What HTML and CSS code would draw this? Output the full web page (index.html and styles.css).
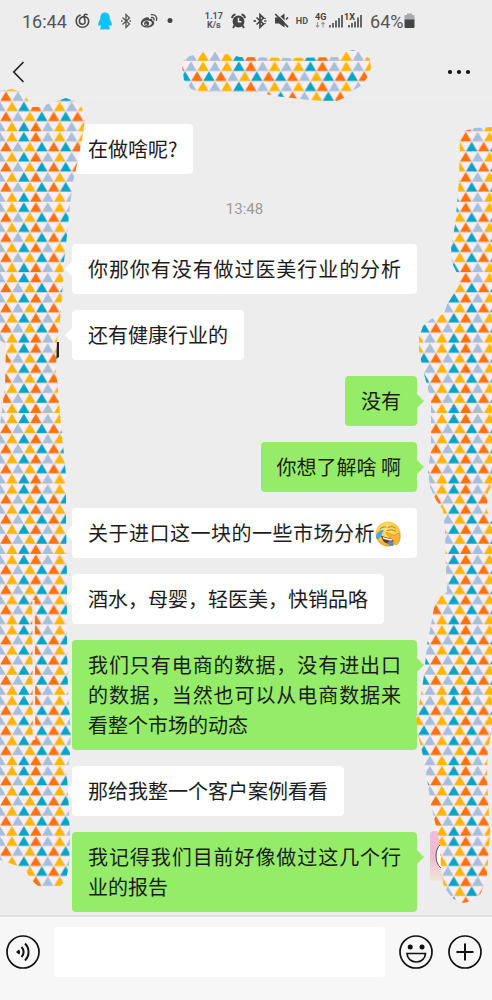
FILE: index.html
```html
<!DOCTYPE html>
<html lang="zh-CN">
  <head>
    <meta charset="UTF-8" />
    <meta name="viewport" content="width=device-width, initial-scale=1.0" />
    <title>聊天</title>
    <link rel="stylesheet" href="styles.css">
  </head>
  <body>
    <div class="page">
      <div class="status-bar">
        <div class="status-group">
          <span class="clock">16:44</span>
          <svg width="15" height="18" viewBox="0 0 15 18" fill="none" stroke="#4a4a4a" stroke-width="1.600" stroke-linecap="round">
            <path d="M5 3.200C2.600 4.200 1.200 6.300 1.200 9c0 3.700 2.800 6.300 6.300 6.300s6.200-2.700 6.200-6c0-2.800-2.200-4.700-4.700-4.700-2.600 0-4.600 2-4.600 4.500 0 1.900 1.300 3.200 3 3.200s2.800-1.200 2.700-2.700c-.1-1.200-.6-2.900-.9-4.600-.3-1.500.2-2.400 1.200-2.700.6-.2 1.100-.1 1.600.3" />
          </svg>
          <svg width="14" height="18" viewBox="0 0 14 18">
            <path fill="#0cc4fb" d="M7 .5C4 .5 2.300 2.700 2.300 5.600c0 1-.2 1.500-.6 2.300C1 9.300.2 10.700.2 12.300c0 1 .3 1.700.7 1.700.4 0 .9-.6 1.200-1.200.2.900.6 1.700 1.200 2.300-.8.300-1.200.8-1.200 1.300 0 .8 1.100 1.200 2.500 1.200 1.100 0 2-.3 2.400-.7.500.4 1.300.7 2.400.7 1.500 0 2.500-.4 2.500-1.200 0-.5-.4-1-1.200-1.300.6-.6 1-1.400 1.200-2.300.3.600.8 1.200 1.200 1.200.4 0 .7-.7.700-1.700 0-1.600-.8-3-1.500-4.400-.4-.8-.6-1.300-.6-2.300C11.700 2.700 10 .5 7 .5z" />
          </svg>
          <svg width="12" height="18" viewBox="0 0 12 18" fill="none" stroke="#555" stroke-width="1.300">
            <path d="M2.500 5.500l7 6.500L6 15.500v-13L9.500 6l-7 6.500" />
            <path d="M1 9h1.500M9.500 9H11" />
          </svg>
          <svg width="18" height="18" viewBox="0 0 18 18">
            <path fill="#4a4a4a" fill-rule="evenodd" d="M7 5.200C4 5.500.8 8.500.8 11.300c0 2.600 2.900 4.200 6.200 4.200 4 0 7.200-2.300 7.200-4.600 0-1.300-1.100-2-2-2.300.5-1.500-.6-2.300-3.200-1.300.4-1.500-.4-2.300-2-2.100zM7 8.600c2.600-.2 4.800.9 4.900 2.500.1 1.500-1.900 2.900-4.600 3.100-2.600.2-4.800-.8-4.900-2.400C2.300 10.200 4.300 8.800 7 8.600z" />
            <circle cx="6.600" cy="11.500" r="2.500" fill="#4a4a4a" />
            <circle cx="6" cy="12.200" r=".8" fill="#ededed" />
            <path d="M11.500 5.500c1.700-.3 3 .9 2.500 2.700M11.300 2.700c3.500-.7 6.200 2 5.200 5.600" fill="none" stroke="#4a4a4a" stroke-width="1.300" stroke-linecap="round" />
          </svg>
          <svg width="8" height="18" viewBox="0 0 8 18"><circle cx="4" cy="8.500" r="2.500" fill="#444" /></svg>
        </div>
        <div class="status-group status-right">
          <span class="speed">1.17<br>K/s</span>
          <svg width="15" height="18" viewBox="0 0 15 18">
            <circle cx="7.500" cy="9.500" r="5.900" fill="#444" />
            <path d="M7.500 5.800v4h3" fill="none" stroke="#ededed" stroke-width="1.500" />
            <path d="M1 6.200C1.200 4 2.500 2.700 4.500 2.400M14 6.200c-.2-2.200-1.500-3.500-3.500-3.800M3.500 13.500L2 16M11.500 13.500L13 16" fill="none" stroke="#444" stroke-width="1.900" />
          </svg>
          <svg width="14" height="18" viewBox="0 0 14 18" fill="none" stroke="#444" stroke-width="1.700">
            <path d="M3.500 5.500l7 6.500L7 15.200V2.800L10.500 6l-7 6.500" />
            <path d="M.5 9h2.300M11.200 9h2.300M12 6v1M12 11v1M2 8v2" stroke-width="1.500" />
          </svg>
          <svg width="15" height="18" viewBox="0 0 15 18">
            <path fill="#444" d="M1 5.500h4L10.500 1.500v14L5 11.500H1z" />
            <path d="M2.500 1.200L15 13.700" stroke="#ededed" stroke-width="1.200" />
            <path d="M1.200 2L14 15.200M12 7.500l2-2" stroke="#444" stroke-width="1.700" />
          </svg>
          <span class="hd">HD</span>
          <svg class="network" width="48" height="18" viewBox="0 0 48 18">
            <text x="0" y="8">4G</text>
            <path d="M2.500 10v5M.8 13.300l1.700 1.900 1.700-1.900M8 15.500v-5M6.300 12.200L8 10.300l1.700 1.900" fill="none" stroke="#999" stroke-width="1.100" />
            <path d="M15 13v2.500M18 11v4.500M21 8.500v7M24 6v9.500M27 3v12.500" stroke="#444" stroke-width="1.600" />
            <text x="29" y="8">1X</text>
            <path d="M34 13v2.500M37 11v4.500M40 9.500v6M43 5.500v10M46 3v12.500" stroke="#444" stroke-width="1.600" />
          </svg>
          <span class="battery">64%<svg width="11" height="18" viewBox="0 0 11 18">
            <path fill="#aaa" d="M3 1.500h5V3h2.500v5H.5V3H3z" />
            <path fill="#444" d="M.5 7.500h10V15a1 1 0 0 1-1 1h-8a1 1 0 0 1-1-1z" />
          </svg></span>
        </div>
      </div>

      <header class="header">
        <button class="icon-button" type="button" aria-label="返回">
          <svg width="14" height="24" viewBox="0 0 14 24" fill="none" stroke="#222" stroke-width="1.700">
            <path d="M11.500 2L1.800 12l9.700 10" />
          </svg>
        </button>
        <svg class="title-mosaic" width="194" height="60" viewBox="180 42 194 60">
          <path fill="url(#mosaic)" d="M182 66L184 60 190 56 200 53 212 51 226 54 240 57 290 58 338 57 345 52 353 50 362 53 370 59 371 68 367 78 361 86 352 91 344 98 337 101 320 101 300 99 275 96 256 92 200 92 191 89 184 80z" />
        </svg>
        <button class="icon-button" type="button" aria-label="更多">
          <svg width="24" height="24" viewBox="0 0 24 24" fill="#111">
            <circle cx="3" cy="12" r="2.100" /><circle cx="12" cy="12" r="2.100" /><circle cx="21" cy="12" r="2.100" />
          </svg>
        </button>
      </header>

      <main class="chat">
        <div class="bubble received">在做啥呢?</div>
        <time class="time">13:48</time>
        <div class="bubble received full">你那你有没有做过医美行业的分析</div>
        <div class="bubble received">还有健康行业的</div>
        <div class="bubble sent">没有</div>
        <div class="bubble sent">你想了解啥 啊</div>
        <div class="bubble received full">关于进口这一块的一些市场分析<svg class="emoji" width="26" height="26" viewBox="0 0 26 26">
          <defs>
            <radialGradient id="face" cx=".45" cy=".35" r=".65">
              <stop offset="0" stop-color="#ffe979" />
              <stop offset=".7" stop-color="#fbc63c" />
              <stop offset="1" stop-color="#e99b1c" />
            </radialGradient>
          </defs>
          <circle cx="13" cy="13" r="12.500" fill="url(#face)" />
          <path d="M5 8c2-2 4-2.500 6-2M13 6.500c3-1.500 6-1 8 1M12 9.500c3-1 6-1 8.500.5" fill="none" stroke="#b87a1c" stroke-width="1" stroke-linecap="round" />
          <path d="M6 14.500c4 2 8 3 13 3-.5 3.500-3 5-6 5s-6-3-7-8z" fill="#6f3513" />
          <path d="M7.500 15.700c3.500 1.500 7 2.200 10.500 2.200l-1 1.700c-3 0-6-.6-8.700-1.800z" fill="#fff" />
          <path d="M9 9.500C7 8 4 9.500 1.800 13c-1.500 2.500-.8 5 1.200 5 2.500 0 2.500-3.500 6-8.500z" fill="#4aa5e6" />
          <path d="M13 20.500c2-1 4-.5 5 1l.5 3c-2 1-4 .5-5-1z" fill="#4792d4" />
          <path d="M10.500 11c4 1.500 7 2.500 9.500 3.500l3-2.500c2 1 2.500 3 2 5.500-.3 2-1 5-3.500 6.300-2-.3-3-2-3-4.300-3-2-6-5-8-8.500z" fill="#fbb339" stroke="#dd8d1d" stroke-width=".7" />
        </svg></div>
        <div class="bubble received">酒水，母婴，轻医美，快销品咯</div>
        <div class="bubble sent">我们只有电商的数据，没有进出口的数据，当然也可以从电商数据来看整个市场的动态</div>
        <div class="bubble received">那给我整一个客户案例看看</div>
        <div class="bubble sent">我记得我们目前好像做过这几个行业的报告</div>
      </main>

      <form class="composer">
        <button class="icon-button" type="button" aria-label="语音">
          <svg width="36" height="36" viewBox="0 0 36 36" fill="none" stroke="#111" stroke-width="1.700">
            <circle cx="18" cy="18" r="16" />
            <path d="M11 18l3-2.600a4 4 0 0 1 0 5.200z" fill="#111" stroke="none" />
            <path d="M16.500 13a7 7 0 0 1 0 10M20 9.500a12 12 0 0 1 0 17" stroke-width="2" />
          </svg>
        </button>
        <input class="message-input" type="text" aria-label="消息" />
        <button class="icon-button" type="button" aria-label="表情">
          <svg width="36" height="36" viewBox="0 0 36 36" fill="none" stroke="#111" stroke-width="1.700">
            <circle cx="18" cy="18" r="16" />
            <circle cx="12.200" cy="13" r="2.500" fill="#111" stroke="none" />
            <circle cx="24" cy="13" r="2.500" fill="#111" stroke="none" />
            <path d="M9 19.500h18.500c-.3 5-4 8.500-9.200 8.500S9.300 24.500 9 19.500z" />
          </svg>
        </button>
        <button class="icon-button" type="button" aria-label="更多功能">
          <svg width="36" height="36" viewBox="0 0 36 36" fill="none" stroke="#111" stroke-width="1.700">
            <circle cx="18" cy="18" r="16" />
            <path d="M18 9.500v17M9.500 18h17" stroke-width="2" />
          </svg>
        </button>
      </form>

      <!-- painted over the avatars -->
      <svg class="mosaic mosaic-left" width="90" height="800" viewBox="0 88 90 800">
        <defs>
          <g id="row-a">
            <path fill="#fd720c" d="M.2 10L6 .4 11.800 10zM48.200 10L54 .4 59.800 10z" />
            <path fill="#a5c0da" d="M12.200 10L18 .4 23.800 10z" />
            <path fill="#ffb508" d="M24.200 10L30 .4 35.800 10z" />
            <path fill="#08a4c5" d="M36.200 10L42 .4 47.800 10zM60.200 10L66 .4 71.800 10z" />
          </g>
          <g id="row-b">
            <path fill="#a5c0da" d="M-5.800 10L0 .4 5.800 10zM42.200 10L48 .4 53.800 10zM66.200 10L72 .4 77.800 10z" />
            <path fill="#ffb508" d="M6.200 10L12 .4 17.800 10zM54.200 10L60 .4 65.800 10z" />
            <path fill="#08a4c5" d="M18.200 10L24 .4 29.800 10z" />
            <path fill="#fd720c" d="M30.200 10L36 .4 41.800 10z" />
          </g>
          <pattern id="mosaic" patternUnits="userSpaceOnUse" x="0" y="131.300" width="71.650" height="70.440" viewBox="0 0 72 70" preserveAspectRatio="none">
            <rect width="72" height="70" fill="#faedf5" />
            <use href="#row-b" />
            <use href="#row-a" y="10" />
            <use href="#row-b" y="20" />
            <use href="#row-a" y="30" />
            <use href="#row-b" y="40" />
            <use href="#row-a" y="50" />
            <use href="#row-b" y="60" />
          </pattern>
        </defs>
        <path d="M56 342h3v15l-3 2z" fill="#222" />
        <path fill="url(#mosaic)" d="M0 91L12 89 21 92 26 97 32 107 40 107 48 104 57 101 66 98 74 101 82 108 85 120 82 140 78 160 73 182 70 205 67 235 64 262 62 295 60 320 57 340 56 370 58 390 60 415 63 445 66 475 66 520 67 580 67 640 68 690 71 735 70 755 67 775 69 810 70 840 69 865 66 880 60 886 38 886 31 880 25 869 12 864 0 860V425L2 410 5 385 6 345 0 340z" />
        <path d="M33.500 600l.5 140" stroke="#f6ebee" stroke-width="2.500" />
      </svg>
      <svg class="mosaic mosaic-right" width="82" height="790" viewBox="410 120 82 790">
        <defs>
          <linearGradient id="avatar" x1="0" y1="0" x2="0" y2="1">
            <stop offset="0" stop-color="#efbede" />
            <stop offset=".5" stop-color="#f2b9cf" />
            <stop offset="1" stop-color="#ede7d8" />
          </linearGradient>
        </defs>
        <rect x="430" y="831" width="40" height="50" rx="4" fill="url(#avatar)" />
        <ellipse cx="444" cy="856" rx="8" ry="13" fill="#fff" stroke="#555" stroke-width="1" />
        <path fill="url(#mosaic)" d="M460 138L465 131 474 128 492 127V485L488 492 487 510 492 522V730L488 748 487 770 488 800 490 830 489 848 487 875 481 893 473 901 463 903 452 898 444 887 441 870 440 845 436 826 431 805 428 785 424 760 418 735 416 718 421 695 424 675 427 645 431 625 434 607 439 597 447 592 446 570 445 530 443 510 436 500 430 487 428 470 431 450 431 400 427 385 423 370 419 350 419 338 423 326 431 319 444 314 447 304 455 292 460 284 458 275 452 263 451 247 455 225 457 205 459 180z" />
      </svg>
    </div>
  </body>
</html>
```
FILE: styles.css
```css
* {
  box-sizing: border-box;
}

body {
  margin: 0;
  font-family: "Noto Sans CJK SC", "Noto Sans", sans-serif;
  background-color: #ededed;
  color: #1c1c1c;
}

.page {
  position: relative;
  display: flex;
  flex-direction: column;
  min-height: 100vh;
}

svg {
  flex: none;
}

/* status bar */

.status-bar {
  display: flex;
  gap: 30px;
  height: 42px;
  padding-left: 22px;
  font-family: Roboto, sans-serif;
  color: #555;
}

.status-group {
  display: flex;
  align-items: center;
  gap: 8px;
}

.status-right {
  gap: 7px;
}

.clock,
.battery {
  font-size: 18px;
}

.battery {
  display: flex;
  align-items: center;
  gap: 1px;
}

.speed {
  width: 20px;
  font-size: 9px;
  font-weight: bold;
  line-height: 9px;
  text-align: center;
}

.hd {
  font-size: 9px;
  font-weight: bold;
}

.network text {
  font-size: 9px;
  font-weight: bold;
  fill: #444;
}

/* header */

.header {
  display: flex;
  align-items: center;
  height: 61px;
  padding: 0 21px 0 12px;
  border-bottom: 1px solid #e9e9e9;
}

.title-mosaic {
  margin-left: auto;
  margin-right: 73px;
}

.icon-button {
  display: flex;
  padding: 0;
  border: none;
  background: none;
  cursor: pointer;
}

/* messages */

.chat {
  flex: 1;
  display: flex;
  flex-direction: column;
  align-items: flex-start;
  gap: 16px;
  padding: 21px 75px 3px 72px;
}

.bubble {
  position: relative;
  padding: 10px 16px;
  border-radius: 4px;
  font-size: 20px;
  line-height: 30px;
  text-align: justify;
}

.bubble::after {
  content: "";
  position: absolute;
  top: 18px;
  border: 7px solid transparent;
}

.received {
  background-color: #fff;
}

.received::after {
  right: 100%;
  border-left: none;
  border-right-color: #fff;
}

.sent {
  align-self: flex-end;
  background-color: #95ec69;
}

.sent::after {
  left: 100%;
  border-right: none;
  border-left-color: #95ec69;
}

.full {
  width: 100%;
  text-align-last: justify;
}

.emoji {
  vertical-align: -6px;
}

.time {
  align-self: center;
  font-family: Roboto, sans-serif;
  font-size: 15px;
  line-height: 38px;
  color: #9a9a9a;
}

/* input bar */

.composer {
  display: flex;
  align-items: center;
  gap: 13px;
  padding: 10px 9px 23px 5px;
  border-top: 2px solid #e2e2e2;
  background-color: #f7f7f7;
}

.message-input {
  flex: 1;
  min-width: 0;
  height: 50px;
  padding: 0 12px;
  border: none;
  border-radius: 4px;
  background-color: #fff;
  font-size: 20px;
}

/* mosaic strokes */

.mosaic {
  position: absolute;
  pointer-events: none;
}

.mosaic-left {
  top: 88px;
  left: 0;
}

.mosaic-right {
  top: 120px;
  right: 0;
}
```
